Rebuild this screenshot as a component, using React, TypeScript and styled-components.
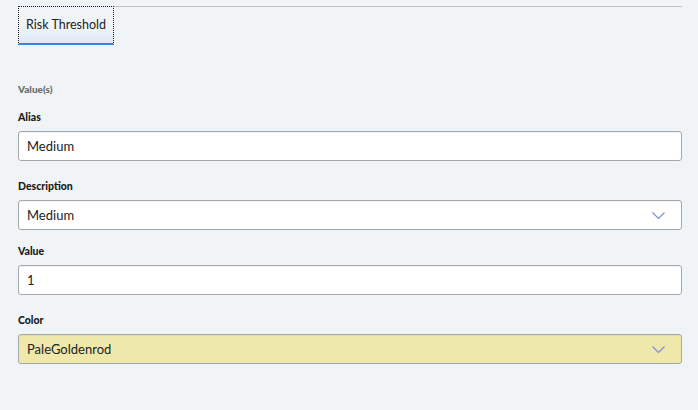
import React from "react";
import styled, { createGlobalStyle } from "styled-components";

const GlobalStyle = createGlobalStyle`
  html, body {
    margin: 0;
    padding: 0;
    background: #f0f4f7;
  }
  body {
    font-family: Lato, "Open Sans", sans-serif;
    color: #222;
  }
`;

const Page = styled.div`
  width: 698px;
  height: 410px;
  box-sizing: border-box;
  padding: 6px 16px 0 18px;
  background: #f0f4f7;
`;

const TabBar = styled.div`
  display: flex;
  border-top: 1px solid #bfc3c7;
`;

const Tab = styled.div<{ active?: boolean }>`
  width: 96px;
  height: 39px;
  box-sizing: border-box;
  margin-top: -1px;
  padding-bottom: 2px;
  display: flex;
  align-items: center;
  justify-content: center;
  font-size: 12.5px;
  color: #222;
  border: 1px dotted #222;
  border-bottom: 2px solid ${(p) => (p.active ? "#3b82e0" : "transparent")};
  background: ${(p) =>
    p.active ? "linear-gradient(to bottom, #f0f4f7 55%, #dce8f7)" : "transparent"};
`;

const Form = styled.div`
  display: flex;
  flex-direction: column;
  padding-top: 38px;
`;

const SectionTitle = styled.div`
  font-size: 10px;
  line-height: 12px;
  font-weight: 900;
  color: #6b6b6b;
  margin-bottom: 16px;
`;

const Field = styled.div<{ gap?: number }>`
  display: flex;
  flex-direction: column;
  margin-bottom: ${(p) => p.gap ?? 19}px;
`;

const Label = styled.label`
  font-size: 10.5px;
  line-height: 12px;
  font-weight: 900;
  color: #1a1a1a;
  margin-bottom: 8px;
`;

const Box = styled.div<{ bg?: string }>`
  height: 30px;
  box-sizing: border-box;
  display: flex;
  align-items: center;
  justify-content: space-between;
  padding: 0 16px 0 8px;
  border: 1px solid #a4a8ac;
  border-radius: 3px;
  background: ${(p) => p.bg || "#fff"};
  font-size: 13px;
  color: #222;
  box-shadow: inset 0 1px 1px rgba(0, 0, 0, 0.05);
`;

const Chevron = () => (
  <svg width="13" height="7" viewBox="0 0 13 7">
    <polyline points="0.5,0.5 6.5,6.5 12.5,0.5" fill="none" stroke="#7f86e6" strokeWidth="1.1" />
  </svg>
);

export default function App() {
  return (
    <Page>
      <GlobalStyle />
      <TabBar>
        <Tab active>Risk Threshold</Tab>
      </TabBar>
      <Form>
        <SectionTitle>Value(s)</SectionTitle>
        <Field>
          <Label>Alias</Label>
          <Box>Medium</Box>
        </Field>
        <Field gap={15}>
          <Label>Description</Label>
          <Box>
            Medium
            <Chevron />
          </Box>
        </Field>
        <Field>
          <Label>Value</Label>
          <Box>1</Box>
        </Field>
        <Field>
          <Label>Color</Label>
          <Box bg="#eee8aa">
            PaleGoldenrod
            <Chevron />
          </Box>
        </Field>
      </Form>
    </Page>
  );
}
